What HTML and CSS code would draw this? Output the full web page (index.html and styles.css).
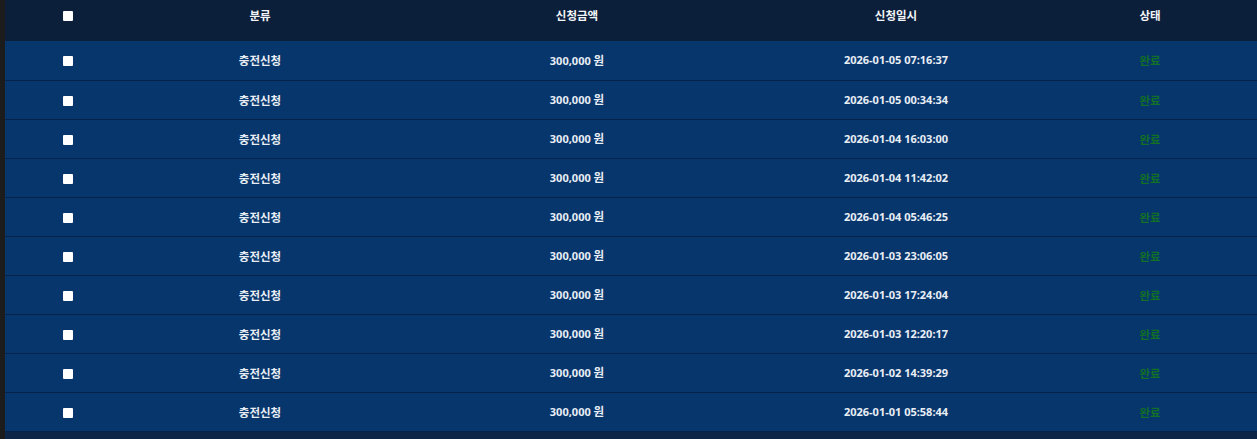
FILE: index.html
```html
<!DOCTYPE html>
<html lang="ko">
<head>
<meta charset="utf-8">
<link rel="stylesheet" href="styles.css">
</head>
<body>
<div class="panel">
  <table class="list">
    <colgroup>
      <col class="c1"><col class="c2"><col class="c3"><col class="c4"><col class="c5">
    </colgroup>
    <thead>
      <tr>
        <th><span class="chk"></span></th>
        <th class="ko">분류</th>
        <th class="ko">신청금액</th>
        <th class="ko">신청일시</th>
        <th class="ko">상태</th>
      </tr>
    </thead>
    <tbody>
      <tr><td><span class="chk"></span></td><td class="ko">충전신청</td><td>300,000 <span class="ko">원</span></td><td>2026-01-05 07:16:37</td><td class="ko ok">완료</td></tr>
      <tr><td><span class="chk"></span></td><td class="ko">충전신청</td><td>300,000 <span class="ko">원</span></td><td>2026-01-05 00:34:34</td><td class="ko ok">완료</td></tr>
      <tr><td><span class="chk"></span></td><td class="ko">충전신청</td><td>300,000 <span class="ko">원</span></td><td>2026-01-04 16:03:00</td><td class="ko ok">완료</td></tr>
      <tr><td><span class="chk"></span></td><td class="ko">충전신청</td><td>300,000 <span class="ko">원</span></td><td>2026-01-04 11:42:02</td><td class="ko ok">완료</td></tr>
      <tr><td><span class="chk"></span></td><td class="ko">충전신청</td><td>300,000 <span class="ko">원</span></td><td>2026-01-04 05:46:25</td><td class="ko ok">완료</td></tr>
      <tr><td><span class="chk"></span></td><td class="ko">충전신청</td><td>300,000 <span class="ko">원</span></td><td>2026-01-03 23:06:05</td><td class="ko ok">완료</td></tr>
      <tr><td><span class="chk"></span></td><td class="ko">충전신청</td><td>300,000 <span class="ko">원</span></td><td>2026-01-03 17:24:04</td><td class="ko ok">완료</td></tr>
      <tr><td><span class="chk"></span></td><td class="ko">충전신청</td><td>300,000 <span class="ko">원</span></td><td>2026-01-03 12:20:17</td><td class="ko ok">완료</td></tr>
      <tr><td><span class="chk"></span></td><td class="ko">충전신청</td><td>300,000 <span class="ko">원</span></td><td>2026-01-02 14:39:29</td><td class="ko ok">완료</td></tr>
      <tr><td><span class="chk"></span></td><td class="ko">충전신청</td><td>300,000 <span class="ko">원</span></td><td>2026-01-01 05:58:44</td><td class="ko ok">완료</td></tr>
    </tbody>
  </table>
</div>
</body>
</html>
```
FILE: styles.css
```css
html, body {
  margin: 0;
  padding: 0;
  background: #1c1c1c;
  height: 100%;
  overflow: hidden;
}
body {
  font-family: "Noto Sans", "Noto Sans CJK KR", sans-serif;
  font-size: 11px;
  font-weight: 700;
  color: #e9eef5;
}
.ko {
  font-family: "Noto Sans CJK KR", sans-serif;
  font-size: 11.5px;
}
.panel {
  margin-left: 5px;
  min-height: 100%;
  background: #0d2546;
  overflow: hidden;
}
.list {
  width: 1268px;
  border-collapse: collapse;
  table-layout: fixed;
}
.c1 { width: 126px; }
.c2 { width: 258px; }
.c3 { width: 376px; }
.c4 { width: 262px; }
.c5 { width: 246px; }
.list thead tr {
  background: #0b1f3b;
  height: 41px;
}
.list th {
  text-align: center;
  vertical-align: middle;
  padding: 0 0 12px;
  font-weight: 700;
  color: #f3f5f8;
  line-height: 16px;
}
.list tbody tr {
  background: #07366c;
  height: 39px;
  border-bottom: 1px solid #05234a;
}
.list td {
  text-align: center;
  vertical-align: middle;
  padding: 0;
  line-height: 16px;
}
.list td.ok {
  color: #127026;
}
.chk {
  display: inline-block;
  width: 10px;
  height: 10px;
  background: #ffffff;
  border-radius: 1px;
  vertical-align: middle;
}
```
